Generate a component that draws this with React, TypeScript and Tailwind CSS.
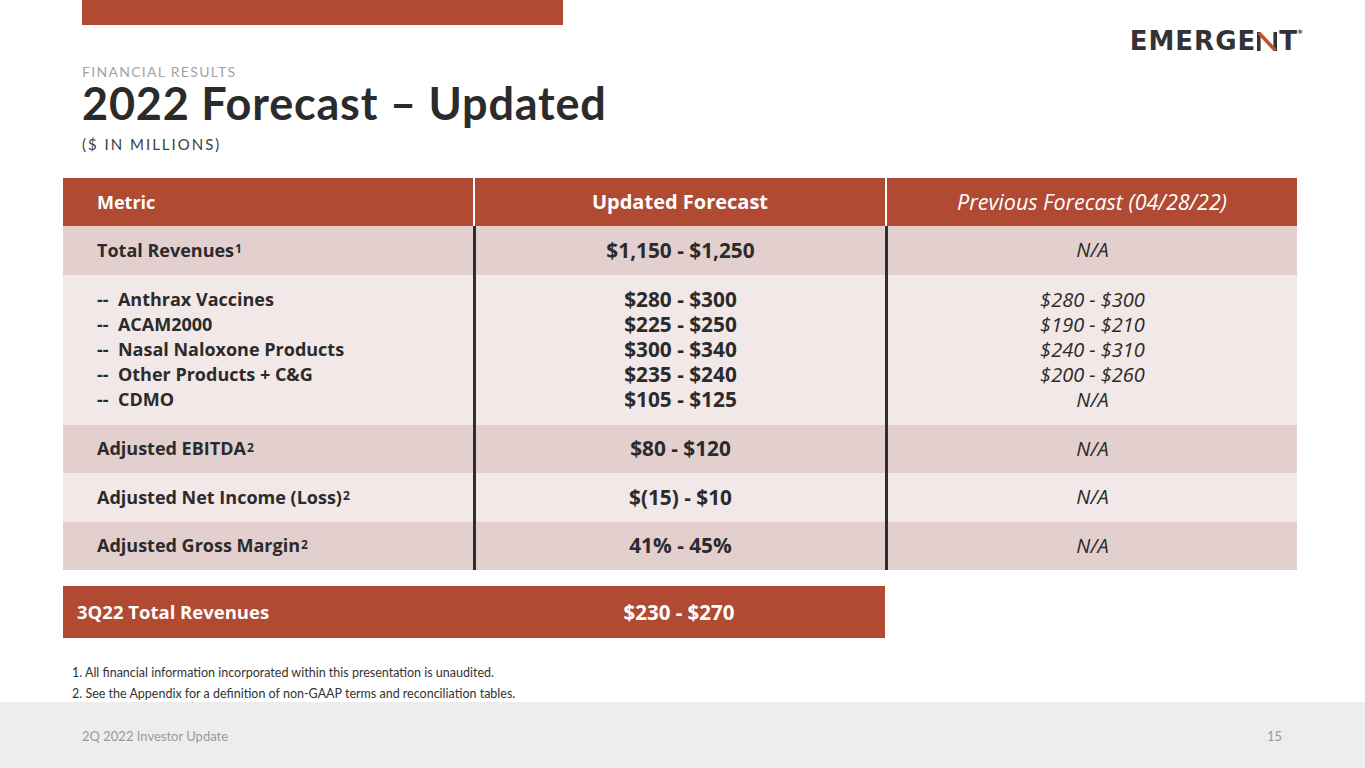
import React from "react";

const RED = "bg-[#b04a33]";

interface Row {
  label: React.ReactNode;
  updated: React.ReactNode;
  previous: React.ReactNode;
  dark: boolean;
  tall?: boolean;
}

const Sup = ({ n }: { n: string }) => (
  <sup className="text-[12px] font-bold relative -top-[1px] ml-[1px]">{n}</sup>
);

const rows: Row[] = [
  {
    label: (
      <>
        Total Revenues<Sup n="1" />
      </>
    ),
    updated: "$1,150 - $1,250",
    previous: "N/A",
    dark: true,
  },
  {
    label: (
      <div className="flex flex-col">
        <span>--&nbsp; Anthrax Vaccines</span>
        <span>--&nbsp; ACAM2000</span>
        <span>--&nbsp; Nasal Naloxone Products</span>
        <span>--&nbsp; Other Products + C&amp;G</span>
        <span>--&nbsp; CDMO</span>
      </div>
    ),
    updated: (
      <div className="flex flex-col">
        <span>$280 - $300</span>
        <span>$225 - $250</span>
        <span>$300 - $340</span>
        <span>$235 - $240</span>
        <span>$105 - $125</span>
      </div>
    ),
    previous: (
      <div className="flex flex-col">
        <span>$280 - $300</span>
        <span>$190 - $210</span>
        <span>$240 - $310</span>
        <span>$200 - $260</span>
        <span>N/A</span>
      </div>
    ),
    dark: false,
    tall: true,
  },
  {
    label: (
      <>
        Adjusted EBITDA<Sup n="2" />
      </>
    ),
    updated: "$80 - $120",
    previous: "N/A",
    dark: true,
  },
  {
    label: (
      <>
        Adjusted Net Income (Loss)<Sup n="2" />
      </>
    ),
    updated: "$(15) - $10",
    previous: "N/A",
    dark: false,
  },
  {
    label: (
      <>
        Adjusted Gross Margin<Sup n="2" />
      </>
    ),
    updated: "41% - 45%",
    previous: "N/A",
    dark: true,
  },
];

const Logo = () => (
  <div className="flex items-center text-[#333333] font-['DejaVu_Sans',sans-serif] font-bold text-[26px] leading-none tracking-[1px]">
    <span>EMERGE</span>
    <svg width="22" height="19" viewBox="0 0 22 19" className="mr-[1px]">
      <rect x="1" y="0" width="3.6" height="19" fill="#333333" />
      <rect x="17.4" y="0" width="3.6" height="19" fill="#333333" />
      <line x1="2.8" y1="0.8" x2="19.2" y2="18.2" stroke="#c0502f" strokeWidth="3.6" />
    </svg>
    <span>T</span>
    <span className="text-[6px] self-start -ml-[1px] mt-[1px]">®</span>
  </div>
);

export default function App() {
  return (
    <div className="w-[1365px] h-[768px] bg-white flex flex-col font-['Lato',sans-serif] text-[#2b2b2b] overflow-hidden">
      <div className="flex justify-between pr-[61px]">
        <div className="flex flex-col pl-[82px]">
          <div className={`${RED} w-[481px] h-[25px]`} />
          <div className="mt-[40px] text-[14px] leading-[14px] tracking-[1.3px] text-[#a3a3a3]">
            FINANCIAL RESULTS
          </div>
          <h1 className="mt-[4px] text-[45px] leading-[40px] font-bold tracking-[0.8px] text-[#2b2b2b]">
            2022 Forecast – Updated
          </h1>
          <div className="mt-[14px] text-[15px] leading-[15px] tracking-[2px] text-[#404040]">
            ($ IN MILLIONS)
          </div>
        </div>
        <div className="pt-[28px]">
          <Logo />
        </div>
      </div>

      <div className="ml-[63px] mt-[26px] w-[1234px] text-[18px] font-bold font-['Open_Sans',sans-serif]">
        <div className={`grid grid-cols-[410px_412px_412px] h-[48px] ${RED} text-white`}>
          <div className="flex items-center pl-[34px]">Metric</div>
          <div className="flex items-center justify-center border-l-[2px] border-white text-[20px]">
            Updated Forecast
          </div>
          <div className="flex items-center justify-center border-l-[2px] border-white font-normal italic text-[21.5px]">
            Previous Forecast (04/28/22)
          </div>
        </div>
        {rows.map((r, i) => (
          <div
            key={i}
            className={`grid grid-cols-[410px_412px_412px] ${r.dark ? "bg-[#e3cfcd]" : "bg-[#f2e8e7]"} ${r.tall ? "h-[150px] leading-[25px]" : "h-[48.5px]"}`}
          >
            <div className="flex items-center pl-[34px]">{r.label}</div>
            <div className="flex items-center justify-center text-center border-l-[3px] border-[#2f2f2f] text-[20.8px]">
              {r.updated}
            </div>
            <div className="flex items-center justify-center text-center border-l-[3px] border-[#2f2f2f] font-normal italic text-[20px]">
              {r.previous}
            </div>
          </div>
        ))}
        <div className={`mt-[16px] w-[822px] h-[52px] ${RED} text-white grid grid-cols-[410px_412px]`}>
          <div className="flex items-center pl-[14px] text-[18.5px]">3Q22 Total Revenues</div>
          <div className="flex items-center justify-center text-[20.5px]">$230 - $270</div>
        </div>
      </div>

      <div className="ml-[72px] mt-[24px] h-[40px] text-[12.5px] leading-[21px] text-[#333333]">
        <div>1. All financial information incorporated within this presentation is unaudited.</div>
        <div>2. See the Appendix for a definition of non-GAAP terms and reconciliation tables.</div>
      </div>

      <div className="mt-auto shrink-0 h-[66px] bg-[#ededed] flex items-center justify-between pt-[4px] pl-[82px] pr-[83px] text-[13px] text-[#9a9a9a]">
        <span>2Q 2022 Investor Update</span>
        <span>15</span>
      </div>
    </div>
  );
}
